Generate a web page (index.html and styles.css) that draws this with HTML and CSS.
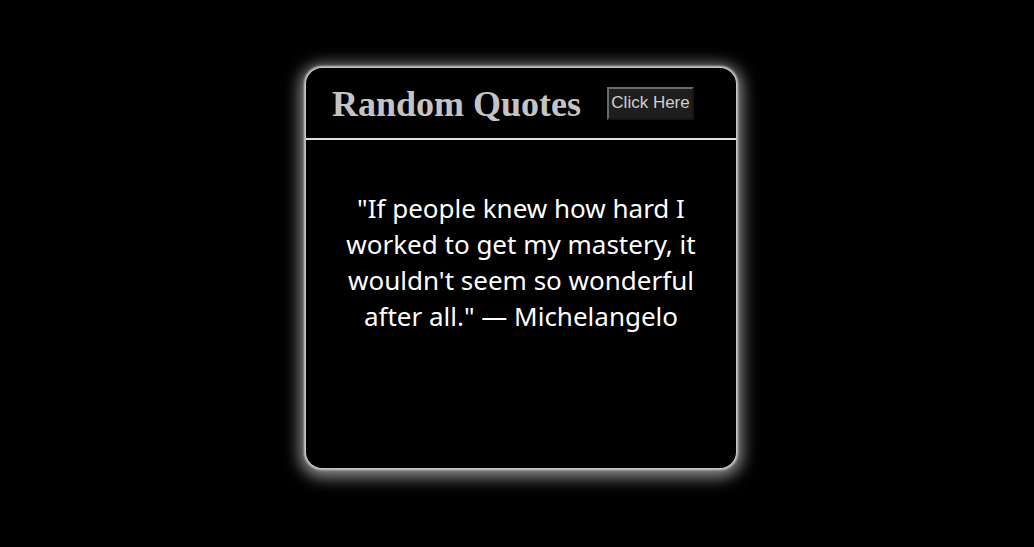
FILE: index.html
```html
<!DOCTYPE html>
<html>
<head>
<meta charset="utf-8">
<link rel="stylesheet" href="styles.css">
</head>
<body>
<div class="page">
  <div class="card">
    <div class="header">
      <h1 class="title">Random Quotes</h1>
      <button class="btn">Click Here</button>
    </div>
    <div class="quote">"If people knew how hard I worked to get my mastery, it wouldn't seem so wonderful after all." — Michelangelo</div>
  </div>
</div>
</body>
</html>
```

FILE: styles.css
```css
html, body {
  margin: 0;
  padding: 0;
  background: #000;
  min-height: 547px;
}
.page {
  display: flex;
  justify-content: center;
  padding: 68px 0 60px 8px;
}
.card {
  width: 430px;
  height: 400px;
  box-sizing: border-box;
  background: #000;
  border-radius: 16px;
  box-shadow: 0 0 2px 2px #c8c8c8, 0 3px 16px 6px rgba(210,210,210,0.7);
  display: flex;
  flex-direction: column;
}
.header {
  display: flex;
  align-items: center;
  height: 72px;
  border-bottom: 2px solid #e0e0e0;
  padding-left: 26px;
  padding-top: 2px;
  box-sizing: border-box;
}
.title {
  margin: 0;
  font-family: "Liberation Serif", serif;
  font-weight: bold;
  font-size: 36px;
  color: #c4c4c4;
}
.btn {
  margin-left: 26px;
  margin-bottom: 2px;
  width: 87px;
  height: 33px;
  padding: 0;
  background: #1e1e1e;
  color: #d0d0d0;
  border: 2px outset #6a6a6a;
  font-family: "Liberation Sans", sans-serif;
  font-size: 17px;
}
.quote {
  margin: 50px auto 0;
  width: 380px;
  text-align: center;
  font-family: "Noto Sans", sans-serif;
  font-size: 26px;
  line-height: 36px;
  color: #fff;
}
```
